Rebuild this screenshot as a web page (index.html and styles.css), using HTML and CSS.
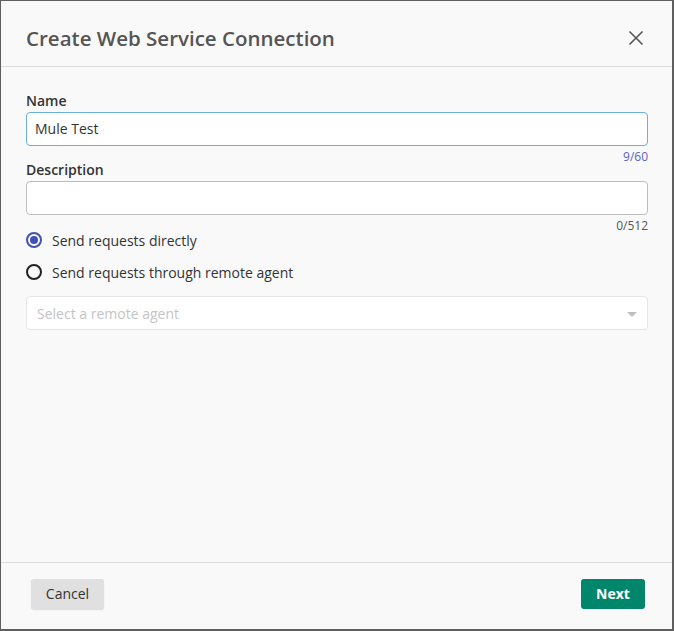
FILE: index.html
```html
<!DOCTYPE html>
<html>
<head>
<meta charset="utf-8">
<link rel="stylesheet" href="styles.css">
</head>
<body>
<div class="dialog">
  <div class="header">
    <h1 class="title">Create Web Service Connection</h1>
    <button class="close" aria-label="Close">
      <svg width="16" height="16" viewBox="0 0 16 16"><path d="M1.5 1.5 L14.5 14.5 M14.5 1.5 L1.5 14.5" stroke="#555" stroke-width="1.6" fill="none"/></svg>
    </button>
  </div>
  <div class="body">
    <label class="label">Name</label>
    <div class="input focused">Mule Test</div>
    <div class="counter blue">9/60</div>
    <label class="label">Description</label>
    <div class="input"></div>
    <div class="counter">0/512</div>
    <div class="radio-row">
      <span class="radio checked"></span><span class="radio-text">Send requests directly</span>
    </div>
    <div class="radio-row">
      <span class="radio"></span><span class="radio-text">Send requests through remote agent</span>
    </div>
    <div class="select">
      <span class="placeholder">Select a remote agent</span>
      <span class="caret"></span>
    </div>
  </div>
  <div class="footer">
    <button class="btn cancel">Cancel</button>
    <button class="btn next">Next</button>
  </div>
</div>
</body>
</html>
```

FILE: styles.css
```css
* { box-sizing: border-box; }
html, body { margin: 0; padding: 0; }
body {
  font-family: "Open Sans", "Noto Sans", sans-serif;
  background: #f9f9f9;
  width: 674px;
  height: 631px;
}
.dialog {
  width: 674px;
  height: 631px;
  background: #f9f9f9;
  border-style: solid;
  border-color: #5f5f5f;
  border-width: 1px 2px 2px 1px;
  display: flex;
  flex-direction: column;
}
.header {
  height: 66px;
  border-bottom: 1px solid #dcdcdc;
  display: flex;
  align-items: center;
  justify-content: space-between;
  padding: 9px 28px 0 25px;
}
.title {
  margin: 0;
  font-size: 20.5px;
  font-weight: 600;
  color: #555;
  line-height: 28px;
}
.close {
  background: none;
  border: none;
  padding: 0;
  width: 16px;
  height: 16px;
  display: flex;
}
.body {
  flex: 1;
  padding: 24px 24px 0 25px;
  display: flex;
  flex-direction: column;
}
.label {
  font-size: 14px;
  font-weight: 600;
  color: #333;
  line-height: 20px;
  margin-bottom: 1px;
}
.input {
  height: 34px;
  background: #fff;
  border: 1px solid #bdbdbd;
  border-radius: 4px;
  font-size: 14px;
  color: #333;
  line-height: 32px;
  padding: 0 8px;
}
.input.focused { border-color: #6aaee6; }
.counter {
  font-size: 12px;
  text-align: right;
  color: #555;
  line-height: 16px;
  height: 11px;
  margin-top: 3px;
}
.counter.blue { color: #5563c1; }
.radio-row {
  display: flex;
  align-items: center;
  height: 22px;
  margin-bottom: 10px;
}
.radio {
  width: 16px;
  height: 16px;
  border-radius: 50%;
  border: 2px solid #222;
  margin-right: 10px;
  position: relative;
  flex: none;
}
.radio.checked {
  border-color: #3f51b5;
}
.radio.checked::after {
  content: "";
  position: absolute;
  left: 2px;
  top: 2px;
  width: 8px;
  height: 8px;
  border-radius: 50%;
  background: #3f51b5;
}
.radio-text {
  font-size: 14px;
  color: #333;
}
.select {
  margin-top: 3px;
  height: 34px;
  background: #fff;
  border: 1px solid #e6e6e6;
  border-radius: 4px;
  display: flex;
  align-items: center;
  justify-content: space-between;
  padding: 0 10px 0 10px;
}
.placeholder {
  font-size: 14px;
  color: #c4c4c4;
}
.caret {
  width: 0;
  height: 0;
  border-left: 5px solid transparent;
  border-right: 5px solid transparent;
  border-top: 5px solid #c0c0c0;
  margin-top: 2px;
}
.footer {
  height: 67px;
  border-top: 1px solid #dcdcdc;
  display: flex;
  justify-content: space-between;
  align-items: flex-start;
  padding: 16px 27px 0 30px;
}
.btn {
  font-family: "Open Sans", "Noto Sans", sans-serif;
  font-size: 14px;
  height: 30px;
  border: none;
  border-radius: 3px;
  padding: 0 14px;
  line-height: 30px;
}
.cancel {
  background: #e0e0e0;
  color: #333;
  width: 73px;
  box-shadow: 0 1px 1px rgba(0,0,0,0.12);
}
.next {
  background: #00866a;
  color: #fff;
  font-weight: 700;
  width: 64px;
}
```
